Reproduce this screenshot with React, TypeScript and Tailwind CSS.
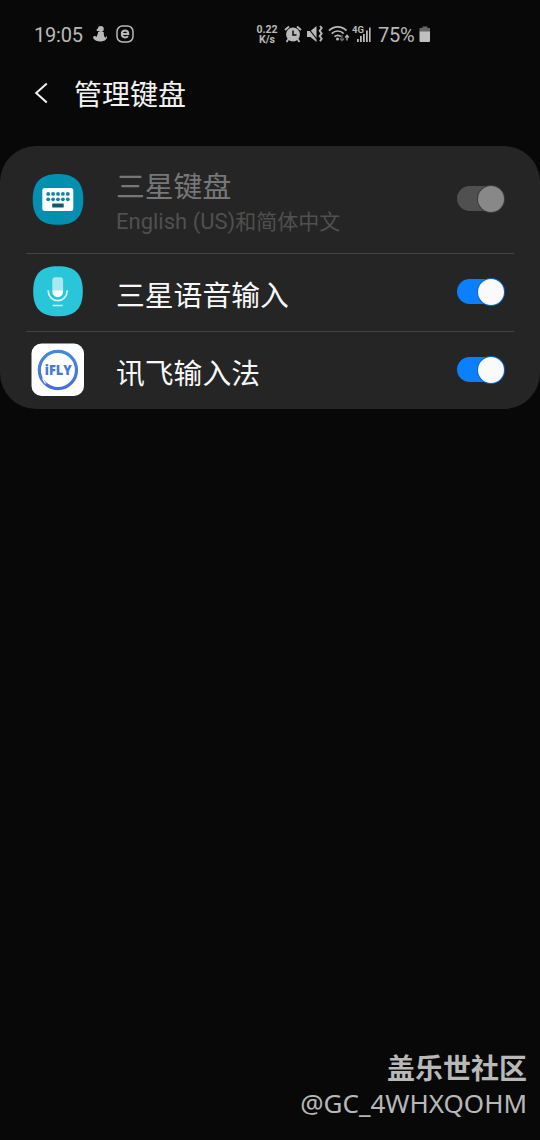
import type { ReactNode } from 'react';

type Keyboard = {
  name: string;
  detail?: [string, string];
  icon: ReactNode;
  locked?: boolean;
};

function KeyboardIcon() {
  const dots = [15.2, 20.1, 25, 29.9, 34.8];
  return (
    <svg width="54" height="54" viewBox="-2 -2 54 54">
      <path d="M25 0C42 0 50.300 8 50.300 25.400S42 50.800 25 50.800S-.3 42.800-.3 25.400S8 0 25 0Z" fill="#028fb0" />
      <rect x="9.300" y="14" width="31" height="23" rx="2.500" fill="#fff" />
      {dots.map((x) => (
        <g key={x} fill="#0b86a6">
          <circle cx={x} cy="19.900" r="1.900" />
          <circle cx={x} cy="25.300" r="1.900" />
        </g>
      ))}
      <rect x="19.200" y="29.500" width="11.500" height="4" fill="#12586b" />
    </svg>
  );
}

function VoiceIcon() {
  return (
    <svg width="54" height="54" viewBox="-2 -1.2 54 54">
      <path d="M25 0C42 0 49.800 7.500 49.800 25S42 50 25 50S.2 42.500.2 25S8 0 25 0Z" fill="#29c6d9" />
      <path d="M19.300 24V14a3 3 0 0 1 3-3h4.800a3 3 0 0 1 3 3v10Z" fill="#a9e8f0" />
      <path d="M19.300 24h10.800v1.500a5.400 5.400 0 0 1-10.800 0Z" fill="#fff" />
      <path d="M15.300 24v1a9.400 9.400 0 0 0 18.800 0v-1" fill="none" stroke="#d9f6f9" strokeWidth="1.700" />
      <path d="M19.700 39.300h10" stroke="#d9f6f9" strokeWidth="1.500" />
    </svg>
  );
}

function FlyIcon() {
  return (
    <svg width="54" height="54" viewBox="0 0 54 54">
      <defs>
        <linearGradient id="fly" x1="0" y1="0" x2="0" y2="1">
          <stop offset="0" stopColor="#418bdc" />
          <stop offset="1" stopColor="#4a6fd4" />
        </linearGradient>
      </defs>
      <rect x="0.500" y="0.500" width="52.500" height="52.500" rx="10" fill="#fff" />
      <circle cx="26.900" cy="27" r="18.600" fill="none" stroke="url(#fly)" strokeWidth="3.200" />
      <path d="M11.500 35.500L15 41.500" stroke="#fff" strokeWidth="1.300" />
      <path d="M13 40.500C17 40.500 20 43 25 44.500L24 46.500C19 45.500 16 43.500 13 40.500Z" fill="#4a6fd4" />
      <text x="27.300" y="32" textAnchor="middle" textLength="27" lengthAdjust="spacingAndGlyphs" className="fill-[#4479d4] font-['Open_Sans',sans-serif] text-[13.500px] font-extrabold">
        iFLY
      </text>
    </svg>
  );
}

const keyboards: Keyboard[] = [
  { name: '三星键盘', detail: ['English (US)', '和简体中文'], icon: <KeyboardIcon />, locked: true },
  { name: '三星语音输入', icon: <VoiceIcon /> },
  { name: '讯飞输入法', icon: <FlyIcon /> },
];

function Toggle({ locked }: { locked?: boolean }) {
  return (
    <div className={`flex h-[25px] w-[47px] items-center justify-end rounded-full ${locked ? 'bg-[#505050]' : 'bg-[#0a80fe]'}`}>
      <div className={`size-[26px] shrink-0 rounded-full ring-1 ${locked ? 'bg-[#888] ring-[#3c3c3c]' : 'bg-[#fafafa] ring-[#0a66c8]'}`} />
    </div>
  );
}

function StatusBar() {
  return (
    <header className="flex h-[68px] items-center pl-[34px] text-[#b9b9b9]">
      <span className="w-[58px] pt-px font-[Roboto] text-[20px] leading-none tracking-[-0.2px]">19:05</span>
      <svg width="17" height="18" viewBox="0 0 17 18" fill="currentColor">
        <circle cx="8.800" cy="4" r="3" />
        <path d="M4.500 4.500l3.500-2v3l-3 .8Z M6 7h5.800c-.3 1.700.4 2.600.2 4.200 1 .6 1.300 1 1.600 1.800.8-.7.7-1.500.3-2.500 1.700 1 1.500 3.200-.5 4.400-2.500 2-8.500 2.300-11.400-.7C.8 13 .9 11.200 2 11c1-.1 1.800.8 3 .6C4.600 10 6.500 9 6 7Z" />
      </svg>
      <svg className="ml-[7px]" width="18" height="18" viewBox="0 0 18 18" fill="none" stroke="currentColor">
        <rect x="1" y="1" width="16" height="16" rx="5.500" strokeWidth="1.500" />
        <path d="M6 9h6.300c0-2.200-1.100-3.500-3.200-3.500S5.800 7 5.800 9s1.200 3.400 3.300 3.400c1.300 0 2.200-.4 2.900-1.200" strokeWidth="2" />
      </svg>
      <div className="ml-[122px] flex w-[22px] flex-col items-center pt-px font-[Roboto] text-[10.500px] leading-[10px] font-bold">
        <div>0.22</div>
        <div>K/s</div>
      </div>
      <svg className="ml-[6px]" width="18" height="18" viewBox="0 0 18 18" fill="none" stroke="currentColor">
        <circle cx="9" cy="9.500" r="6.900" fill="currentColor" stroke="none" />
        <path d="M9 5.500v4.500h3.500" stroke="#080808" strokeWidth="1.500" />
        <path d="M1 5L5 1.500M13 1.500L17 5M4.500 14l-2 3M13.500 14l2 3" strokeWidth="1.800" />
      </svg>
      <svg className="ml-[4px]" width="18" height="18" viewBox="0 0 18 18" fill="none" stroke="currentColor">
        <path d="M1 6h3.500L10.500 1v16l-6-5H1Z" fill="currentColor" stroke="none" />
        <path d="M1 1.500L11 14.500" stroke="#080808" strokeWidth="1.200" />
        <path d="M14 1l1.700 2-2 2.700 2 2.700-2 2.700 2 2.700-1.700 2.500" strokeWidth="1.900" />
      </svg>
      <svg className="ml-[4px]" width="22" height="18" viewBox="0 0 22 18" fill="none" stroke="currentColor">
        <path d="M1 5.700C6 .5 13.500.5 18.500 5.700M3.700 8.700c3.600-3.600 8.500-3.600 12 0M6.500 11.700c2-1.900 4.700-1.900 6.500 0" strokeWidth="1.700" />
        <circle cx="9.500" cy="14" r="1.500" fill="currentColor" stroke="none" />
        <path d="M14 10v6M12 13.500l2 2.300 2-2.300" stroke="#666" strokeWidth="1.300" />
        <path d="M19 15.500v-5M17.200 12.500l1.800-2.200 1.800 2.200" strokeWidth="1.300" />
      </svg>
      <svg className="ml-[2px]" width="20" height="18" viewBox="0 0 20 18" fill="currentColor">
        <text x="0" y="8" className="font-[Roboto] text-[9.500px] font-bold">4G</text>
        <rect x="5" y="14" width="1.800" height="3" />
        <rect x="8" y="11" width="1.800" height="6" />
        <rect x="11" y="9" width="1.800" height="8" />
        <rect x="14" y="5.500" width="1.800" height="11.500" />
        <rect x="17" y="2.500" width="1.600" height="14.500" />
      </svg>
      <span className="ml-[6px] w-[36px] pt-px font-[Roboto] text-[20px] leading-none tracking-[-0.3px]">75%</span>
      <svg className="ml-[5px]" width="12" height="17" viewBox="0 0 12 17">
        <path d="M3.500 .5h5v1.500H11V6H.5V2h3Z" fill="#666" />
        <path d="M.5 5.500H11V15a1 1 0 0 1-1 1H1.500a1 1 0 0 1-1-1Z" fill="#c0c0c0" />
      </svg>
    </header>
  );
}

export default function App() {
  return (
    <div className="flex h-[1140px] w-[540px] flex-col overflow-hidden bg-[#080808] font-[Roboto,'Noto_Sans_CJK_SC',sans-serif]">
      <StatusBar />

      <div className="flex h-[50px] items-center pl-[34px]">
        <svg width="15" height="22" viewBox="0 0 15 22" fill="none" stroke="#f2f2f2" strokeWidth="2">
          <path d="M12.800 1.500L2.200 11l10.600 9.500" />
        </svg>
        <h1 className="ml-[25px] pt-[5px] text-[28px] leading-[45px] text-[#f2f2f2]">管理键盘</h1>
      </div>

      <main className="mt-[28px] overflow-hidden rounded-[36px] bg-[#252525]">
        {keyboards.map((kb, i) => (
          <div key={kb.name}>
            {i > 0 && <div className="mx-[26px] h-px bg-[#434343]" />}
            <div className={`flex items-center pr-[36px] pb-[2px] pl-[31px] ${kb.locked ? 'h-[107px]' : 'h-[77px]'}`}>
              {kb.icon}
              <div className="ml-[31px] flex-1 pt-[9px]">
                <div className={`text-[28.800px] leading-[37px] ${kb.locked ? 'text-[#777]' : 'text-[#f8f8f8]'}`}>{kb.name}</div>
                {kb.detail && (
                  <div className="text-[21px] leading-[32px] text-[#505050]">
                    <span className="text-[22px]">{kb.detail[0]}</span>
                    {kb.detail[1]}
                  </div>
                )}
              </div>
              <Toggle locked={kb.locked} />
            </div>
          </div>
        ))}
      </main>

      <footer className="mt-auto flex flex-col items-end pr-[13px] pb-[19px] text-[#b8b8b8]">
        <div className="text-[28px] leading-[31px] font-bold">盖乐世社区</div>
        <div className="font-['Noto_Sans'] text-[26px] leading-[36px]">@GC_4WHXQOHM</div>
      </footer>
    </div>
  );
}
